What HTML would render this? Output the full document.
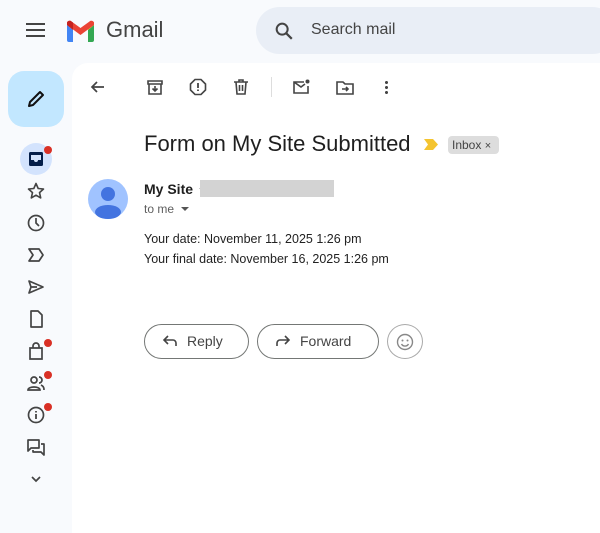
<!DOCTYPE html>
<html><head><meta charset="utf-8"><style>
*{margin:0;padding:0;box-sizing:border-box}
body{width:600px;height:517px;background:#f8fafd;font-family:"Liberation Sans",Arial,sans-serif;position:relative;overflow:hidden;color:#1f1f1f}
.a{position:absolute}
svg{display:block}
.ic{position:absolute;width:20px;height:20px}
</style></head><body>
<div class="a" style="left:26px;top:23px;width:19px;height:14px">
<div style="height:2px;background:#444;margin-bottom:4px"></div><div style="height:2px;background:#444;margin-bottom:4px"></div><div style="height:2px;background:#444"></div></div>
<svg class="a" style="left:65px;top:20px" width="31" height="22" viewBox="0 0 31 22">
<path d="M2 22V5l6 5v12H4a2 2 0 0 1-2-2z" fill="#4285f4"/>
<path d="M23 22V10l6-5v15a2 2 0 0 1-2 2z" fill="#34a853"/>
<path d="M23 3l6-1v3l-6 5z" fill="#fbbc04"/>
<path d="M2 5V3c0-2 3-3 4.5-1.5L15.5 8l9-6.5C26 0 29 1 29 3v2l-13.5 10L2 5z" fill="#ea4335"/>
<path d="M2 5V3c0-2 3-3 4.5-1.5L8 2.5V10z" fill="#c5221f"/>
</svg>
<div class="a" style="left:106px;top:17px;font-size:22px;color:#444">Gmail</div>
<div class="a" style="left:256px;top:7px;width:360px;height:47px;background:#e9eef6;border-radius:24px"></div>
<svg class="a" style="left:273px;top:20px" width="22" height="22" viewBox="0 0 24 24"><circle cx="10" cy="10" r="6" fill="none" stroke="#444" stroke-width="2.2"/><path d="M14.5 14.5l6 6" stroke="#444" stroke-width="2.4"/></svg>
<div class="a" style="left:311px;top:21px;font-size:16px;color:#444">Search mail</div>
<div class="a" style="left:8px;top:71px;width:56px;height:56px;background:#c2e7ff;border-radius:16px"></div>
<svg class="a" style="left:26px;top:89px" width="20" height="20" viewBox="0 0 20 20"><path d="M3 17l1-4L14 3l3 3L7 16z" fill="none" stroke="#111" stroke-width="2" stroke-linejoin="round"/></svg>
<div class="a" style="left:72px;top:63px;width:540px;height:470px;background:#fff;border-radius:16px 0 0 0"></div>
<div class="a" style="left:20px;top:143px;width:32px;height:32px;border-radius:50%;background:#d3e3fd"></div>
<svg class="a" style="left:28px;top:151px" width="16" height="16" viewBox="0 0 16 16"><rect x="1" y="1" width="14" height="14" rx="1.5" fill="#041e49"/><path d="M3 4h10v5h-3a2 2 0 0 1-4 0H3z" fill="#d3e3fd"/></svg>
<div class="a" style="left:44px;top:146px;width:8px;height:8px;border-radius:50%;background:#d93025"></div>
<svg class="ic" style="left:26px;top:181px" viewBox="0 0 20 20"><path d="M10 2.5l2.2 5 5.3.5-4 3.6 1.2 5.3L10 14.2l-4.7 2.7 1.2-5.3-4-3.6 5.3-.5z" fill="none" stroke="#444" stroke-width="1.6" stroke-linejoin="round"/></svg>
<svg class="ic" style="left:26px;top:213px" viewBox="0 0 20 20"><circle cx="10" cy="10" r="7.5" fill="none" stroke="#444" stroke-width="1.7"/><path d="M10 5v5l3 3" fill="none" stroke="#444" stroke-width="1.7"/></svg>
<svg class="ic" style="left:26px;top:245px" viewBox="0 0 20 20"><path d="M3 4h10l4 6-4 6H3l4-6z" fill="none" stroke="#444" stroke-width="1.7" stroke-linejoin="round"/></svg>
<svg class="ic" style="left:26px;top:277px" viewBox="0 0 20 20"><path d="M3 4l14 6-14 6 2-6zM5 10h6" fill="none" stroke="#444" stroke-width="1.7" stroke-linejoin="round"/></svg>
<svg class="ic" style="left:26px;top:309px" viewBox="0 0 20 20"><path d="M5 2h7l4 4v12H5z" fill="none" stroke="#444" stroke-width="1.7" stroke-linejoin="round"/></svg>
<svg class="ic" style="left:26px;top:341px" viewBox="0 0 20 20"><path d="M4 7h12v11H4zM7 7V5a3 3 0 0 1 6 0v2" fill="none" stroke="#444" stroke-width="1.7"/></svg>
<div class="a" style="left:44px;top:339px;width:8px;height:8px;border-radius:50%;background:#d93025"></div>
<svg class="ic" style="left:26px;top:373px" viewBox="0 0 20 20"><circle cx="8" cy="7" r="3" fill="none" stroke="#444" stroke-width="1.7"/><path d="M2 17c0-4 12-4 12 0zM13 4a3 3 0 0 1 0 6M15 12c2 1 3 2 3 5" fill="none" stroke="#444" stroke-width="1.7"/></svg>
<div class="a" style="left:44px;top:371px;width:8px;height:8px;border-radius:50%;background:#d93025"></div>
<svg class="ic" style="left:26px;top:405px" viewBox="0 0 20 20"><circle cx="10" cy="10" r="7.5" fill="none" stroke="#444" stroke-width="1.7"/><path d="M10 9v5M10 6v1.5" stroke="#444" stroke-width="1.8"/></svg>
<div class="a" style="left:44px;top:403px;width:8px;height:8px;border-radius:50%;background:#d93025"></div>
<svg class="ic" style="left:26px;top:437px" viewBox="0 0 20 20"><path d="M2 3h11v8H5l-3 3zM15 7h3v11l-3-3H7v-2" fill="none" stroke="#444" stroke-width="1.7" stroke-linejoin="round"/></svg>
<svg class="ic" style="left:26px;top:469px" viewBox="0 0 20 20"><path d="M6 8l4 4 4-4" fill="none" stroke="#444" stroke-width="1.7"/></svg>
<svg class="ic" style="left:88px;top:77px" viewBox="0 0 20 20"><path d="M16 10H4M9 5l-5 5 5 5" fill="none" stroke="#444" stroke-width="1.7"/></svg>
<svg class="ic" style="left:145px;top:77px" viewBox="0 0 20 20"><path d="M3 4h14v3H3zM4 7h12v10H4zM10 9v5M7.5 11.5L10 14l2.5-2.5" fill="none" stroke="#444" stroke-width="1.6"/></svg>
<svg class="ic" style="left:188px;top:77px" viewBox="0 0 20 20"><path d="M7 2.5h6l4.5 4.5v6L13 17.5H7L2.5 13V7z" fill="none" stroke="#444" stroke-width="1.6"/><path d="M10 6v5M10 12.5v1.5" stroke="#444" stroke-width="1.8"/></svg>
<svg class="ic" style="left:231px;top:77px" viewBox="0 0 20 20"><path d="M3 5h14M8 5V3h4v2M5 5l1 12h8l1-12M8.5 8v6M11.5 8v6" fill="none" stroke="#444" stroke-width="1.6"/></svg>
<div class="a" style="left:271px;top:77px;width:1px;height:20px;background:#ddd"></div>
<svg class="ic" style="left:291px;top:77px" viewBox="0 0 20 20"><path d="M13 5H3v11h14V9M3 5l7 5 4-3" fill="none" stroke="#444" stroke-width="1.6"/><circle cx="16.5" cy="4.5" r="2" fill="#444"/></svg>
<svg class="ic" style="left:335px;top:77px" viewBox="0 0 20 20"><path d="M2 5h6l2 2h8v10H2zM7 12h6M11 10l2 2-2 2" fill="none" stroke="#444" stroke-width="1.6"/></svg>
<div class="a" style="left:385px;top:80px;width:3px;height:14px;background:radial-gradient(circle,#444 1.4px,transparent 1.6px) 0 0/3px 5px"></div>
<div class="a" style="left:144px;top:131px;font-size:22px;color:#1f1f1f">Form on My Site Submitted</div>
<svg class="a" style="left:424px;top:139px" width="14" height="11" viewBox="0 0 14 11"><path d="M0 0h9l5 5.5L9 11H0l4-5.5z" fill="#f4c430"/></svg>
<div class="a" style="left:448px;top:136px;width:51px;height:18px;background:#ddd;border-radius:4px;font-size:12px;color:#444;padding:2px 0 0 4px">Inbox <span style="font-size:11px">×</span></div>
<svg class="a" style="left:88px;top:179px" width="40" height="40" viewBox="0 0 40 40"><circle cx="20" cy="20" r="20" fill="#a0c3ff"/><circle cx="20" cy="15" r="7" fill="#4374e0"/><ellipse cx="20" cy="33" rx="13" ry="7" fill="#4374e0"/></svg>
<div class="a" style="left:144px;top:181px;font-size:14px;font-weight:bold;color:#1f1f1f">My Site</div>
<div class="a" style="left:199px;top:188px;width:4px;height:1px;background:#ccc"></div>
<div class="a" style="left:200px;top:180px;width:134px;height:17px;background:#d3d3d3"></div>
<div class="a" style="left:144px;top:202px;font-size:12px;color:#5e5e5e">to me</div>
<div class="a" style="left:181px;top:207px;width:0;height:0;border-left:4px solid transparent;border-right:4px solid transparent;border-top:4px solid #555"></div>
<div class="a" style="left:144px;top:229px;font-size:12.5px;line-height:20px;color:#222">Your date: November 11, 2025 1:26 pm<br>Your final date: November 16, 2025 1:26 pm</div>
<div class="a" style="left:144px;top:324px;width:105px;height:35px;border:1px solid #747775;border-radius:18px"></div>
<svg class="a" style="left:162px;top:334px" width="16" height="14" viewBox="0 0 16 14"><path d="M14 12V9a3 3 0 0 0-3-3H3M6 2L2 6l4 4" fill="none" stroke="#444" stroke-width="1.6"/></svg>
<div class="a" style="left:187px;top:333px;font-size:14px;color:#444">Reply</div>
<div class="a" style="left:257px;top:324px;width:122px;height:35px;border:1px solid #747775;border-radius:18px"></div>
<svg class="a" style="left:275px;top:334px" width="16" height="14" viewBox="0 0 16 14"><path d="M2 12V9a3 3 0 0 1 3-3h8M10 2l4 4-4 4" fill="none" stroke="#444" stroke-width="1.6"/></svg>
<div class="a" style="left:300px;top:333px;font-size:14px;color:#444">Forward</div>
<div class="a" style="left:387px;top:324px;width:36px;height:35px;border:1px solid #aaa;border-radius:50%"></div>
<svg class="a" style="left:396px;top:333px" width="18" height="18" viewBox="0 0 18 18"><circle cx="9" cy="9" r="7.5" fill="none" stroke="#888" stroke-width="1.4"/><circle cx="6.5" cy="7.5" r="1" fill="#888"/><circle cx="11.5" cy="7.5" r="1" fill="#888"/><path d="M5.5 11a4 4 0 0 0 7 0" fill="none" stroke="#888" stroke-width="1.4"/></svg>
</body></html>
